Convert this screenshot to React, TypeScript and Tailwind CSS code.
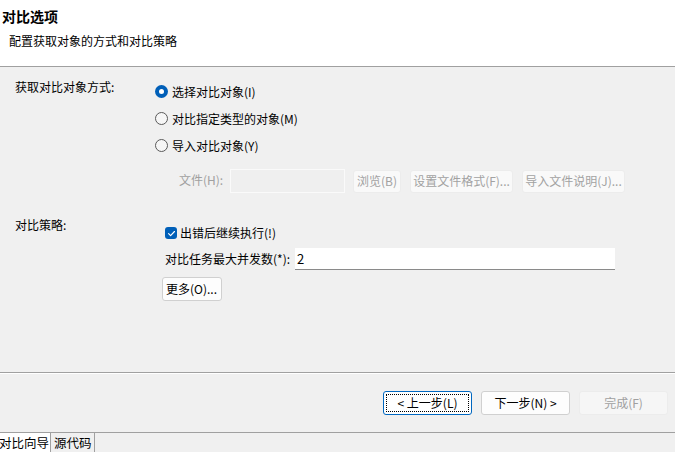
import React from 'react';

const font = { fontFamily: '"Microsoft YaHei UI", "Noto Sans CJK SC", "Noto Sans", sans-serif' };

const Radio: React.FC<{ checked?: boolean; label: string }> = ({ checked, label }) => (
  <div className="flex items-center h-[27px] gap-[4px]">
    {checked ? (
      <span className="w-[13px] h-[13px] rounded-full bg-[#005fb8] flex items-center justify-center">
        <span className="w-[5px] h-[5px] rounded-full bg-white" />
      </span>
    ) : (
      <span className="w-[13px] h-[13px] rounded-full border border-[#5a5a5a] bg-[#f6f6f6]" />
    )}
    <span className="text-[12px] leading-[18px] text-black">{label}</span>
  </div>
);

const DisabledButton: React.FC<{ label: string; width: string }> = ({ label, width }) => (
  <button
    className={`${width} h-[23px] rounded-[3px] border border-[#ececec] bg-[#f9f9f9] text-[12px] leading-[18px] text-[#a2a2a2]`}
  >
    {label}
  </button>
);

export default function App() {
  return (
    <div className="w-[675px] h-[452px] flex flex-col bg-[#f0f0f0] overflow-hidden" style={font}>
      {/* header */}
      <div className="h-[67px] bg-white border-b border-[#a0a0a0] flex flex-col">
        <div className="pl-[2px] pt-[6px] text-[14px] leading-[20px] font-bold text-black">对比选项</div>
        <div className="pl-[9px] pt-[6px] text-[12px] leading-[18px] text-black">配置获取对象的方式和对比策略</div>
      </div>

      {/* body */}
      <div className="flex-1 flex flex-col pt-[11px]">
        <div className="flex">
          <div className="w-[155px] pl-[15px] text-[12px] leading-[18px] text-black">获取对比对象方式:</div>
          <div className="flex flex-col">
            <Radio checked label="选择对比对象(I)" />
            <Radio label="对比指定类型的对象(M)" />
            <Radio label="导入对比对象(Y)" />
          </div>
        </div>

        <div className="flex items-center mt-[10px] pl-[179px]">
          <span className="w-[51px] text-[12px] leading-[18px] text-[#a0a0a0] -mt-[2px]">文件(H):</span>
          <div className="w-[115px] h-[24px] border border-[#fafafa] bg-[#efefef]" />
          <div className="flex items-center gap-[9px] ml-[8px]">
            <DisabledButton label="浏览(B)" width="w-[48px]" />
            <DisabledButton label="设置文件格式(F)..." width="w-[103px]" />
            <DisabledButton label="导入文件说明(J)..." width="w-[103px]" />
          </div>
        </div>

        <div className="flex mt-[23px]">
          <div className="w-[155px] pl-[15px] text-[12px] leading-[18px] text-black">对比策略:</div>
          <div className="flex flex-col pt-[8px]">
            <div className="flex items-center h-[18px] pl-[10px] gap-[3px]">
              <span className="w-[12px] h-[12px] rounded-[3px] bg-[#005fb8] flex items-center justify-center">
                <svg width="9" height="9" viewBox="0 0 10 10">
                  <path d="M1.8 5.2 L4 7.3 L8.3 2.8" fill="none" stroke="white" strokeWidth="1.3" strokeLinecap="round" strokeLinejoin="round" />
                </svg>
              </span>
              <span className="text-[12px] leading-[18px] text-black">出错后继续执行(!)</span>
            </div>
            <div className="flex items-center mt-[6px] pl-[10px] gap-[5px]">
              <span className="text-[12px] leading-[18px] text-black">对比任务最大并发数(*):</span>
              <div className="w-[320px] h-[22px] bg-white border-b border-[#8a8a8a] text-[13px] leading-[21px] pl-[2px] text-black">
                2
              </div>
            </div>
            <button className="mt-[7px] ml-[7px] w-[60px] h-[24px] rounded-[3px] border border-[#d0d0d0] bg-[#fdfdfd] text-[12px] leading-[18px] text-black text-left pl-[3px]">
              更多(O)...
            </button>
          </div>
        </div>
      </div>

      {/* footer buttons */}
      <div className="h-[60px] border-t border-[#a0a0a0] flex flex-col">
        <div className="h-[1px] bg-white" />
        <div className="flex justify-end gap-[9px] pr-[7px] pt-[17px]">
          <button className="w-[89px] h-[24px] rounded-[3px] border border-[#0067c0] bg-white p-[2px]">
            <span className="flex items-center justify-center w-full h-full border border-dotted border-black text-[12px] leading-[16px] text-black">
              &lt; 上一步(L)
            </span>
          </button>
          <button className="w-[89px] h-[24px] rounded-[3px] border border-[#d0d0d0] bg-[#fdfdfd] text-[12px] leading-[18px] text-black">
            下一步(N) &gt;
          </button>
          <button className="w-[89px] h-[24px] rounded-[3px] border border-[#ececec] bg-[#f6f6f6] text-[12px] leading-[18px] text-[#a0a0a0]">
            完成(F)
          </button>
        </div>
      </div>

      {/* tabs */}
      <div className="h-[20px] border-t border-[#a0a0a0] flex">
        <div className="w-[51px] bg-white text-[12.5px] leading-[19px] text-black -ml-[1px]">对比向导</div>
        <div className="w-[45px] border-l border-r border-[#a0a0a0] bg-[#f0f0f0] text-[12.5px] leading-[19px] text-black pl-[3px]">
          源代码
        </div>
      </div>
    </div>
  );
}
